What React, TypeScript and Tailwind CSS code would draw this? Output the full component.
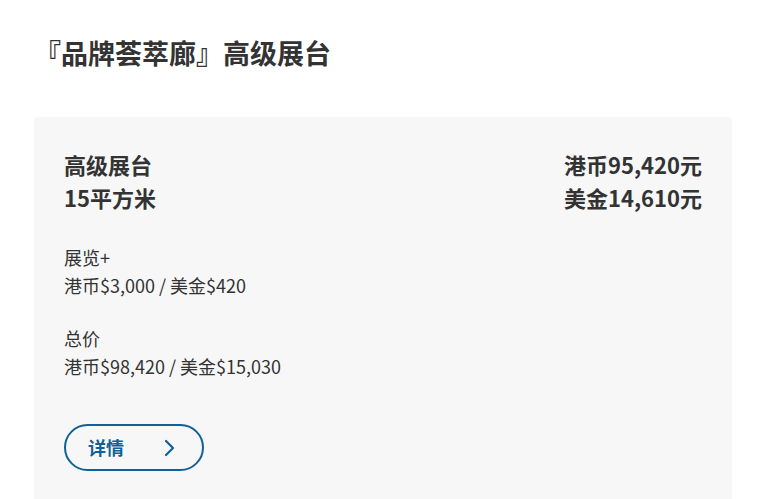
import React from "react";

const font = { fontFamily: '"Noto Sans CJK SC", "Noto Sans", sans-serif' };

const App: React.FC = () => {
  return (
    <div className="min-h-screen bg-white text-[#333]" style={font}>
      <div className="pl-[34px] pr-[25px] pt-[34px]">
        <h1 className="text-[27px] font-bold leading-[38px]">『品牌荟萃廊』高级展台</h1>
        <div className="mt-[45px] rounded-[4px] bg-[#f7f7f7] px-[30px] pt-[31px] pb-[40px]">
          <div className="flex justify-between text-[22px] font-bold leading-[33px]">
            <div>
              <p>高级展台</p>
              <p>15平方米</p>
            </div>
            <div className="text-right">
              <p>港币95,420元</p>
              <p>美金14,610元</p>
            </div>
          </div>
          <div className="mt-[29px] text-[18px] leading-[28px]">
            <p>展览+</p>
            <p>港币$3,000 / 美金$420</p>
          </div>
          <div className="mt-[25px] text-[18px] leading-[28px]">
            <p>总价</p>
            <p>港币$98,420 / 美金$15,030</p>
          </div>
          <button className="mt-[44px] flex h-[47px] w-[140px] items-center justify-between rounded-full border-2 border-[#0f6196] pl-[22px] pr-[26px] text-[18px] font-bold text-[#0f6196]">
            <span>详情</span>
            <svg width="12" height="18" viewBox="0 0 12 18" fill="none">
              <path d="M2 2l7 7-7 7" stroke="#0f6196" strokeWidth="2.2" strokeLinecap="round" strokeLinejoin="round" />
            </svg>
          </button>
        </div>
      </div>
    </div>
  );
};

export default App;
